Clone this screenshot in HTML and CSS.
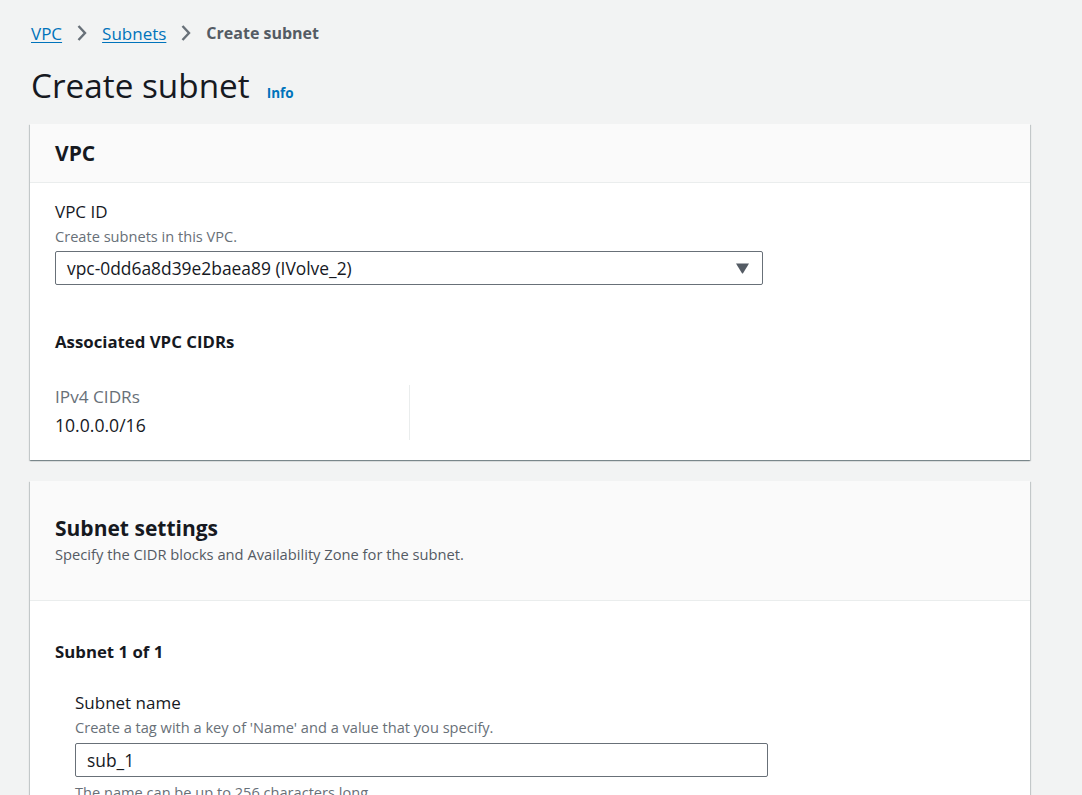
FILE: index.html
```html
<!DOCTYPE html>
<html lang="en">
<head>
<meta charset="utf-8">
<title>Create subnet</title>
<link rel="stylesheet" href="styles.css">
</head>
<body>
<div class="page">
  <nav class="crumbs">
    <a class="crumb-link" href="#">VPC</a>
    <svg class="chev" width="16" height="18" viewBox="0 0 16 18"><path d="M4.5 2 L11 9 L4.5 16" fill="none" stroke="#687078" stroke-width="2.4"/></svg>
    <a class="crumb-link" href="#">Subnets</a>
    <svg class="chev" width="16" height="18" viewBox="0 0 16 18"><path d="M4.5 2 L11 9 L4.5 16" fill="none" stroke="#687078" stroke-width="2.4"/></svg>
    <span class="crumb-current">Create subnet</span>
  </nav>
  <div class="title-row">
    <h1 class="title">Create subnet</h1>
    <a class="info" href="#">Info</a>
  </div>

  <section class="card">
    <div class="card-head small">
      <h2 class="card-title">VPC</h2>
    </div>
    <div class="card-body">
      <div class="field">
        <div class="label">VPC ID</div>
        <div class="desc">Create subnets in this VPC.</div>
        <div class="select">
          <span>vpc-0dd6a8d39e2baea89 (IVolve_2)</span>
          <svg class="caret" width="13" height="11" viewBox="0 0 13 11"><path d="M0 0.5 L13 0.5 L7.2 10 Q6.5 11 5.8 10 Z" fill="#545b64"/></svg>
        </div>
      </div>
      <h3 class="sub-title">Associated VPC CIDRs</h3>
      <div class="kv-row">
        <div class="kv">
          <div class="kv-key">IPv4 CIDRs</div>
          <div class="kv-val">10.0.0.0/16</div>
        </div>
        <div class="kv divided"></div>
      </div>
    </div>
  </section>

  <section class="card">
    <div class="card-head big">
      <h2 class="card-title">Subnet settings</h2>
      <div class="card-desc">Specify the CIDR blocks and Availability Zone for the subnet.</div>
    </div>
    <div class="card-body second">
      <h3 class="sub-title">Subnet 1 of 1</h3>
      <div class="field indent">
        <div class="label">Subnet name</div>
        <div class="desc">Create a tag with a key of 'Name' and a value that you specify.</div>
        <div class="input">sub_1</div>
        <div class="hint">The name can be up to 256 characters long.</div>
      </div>
    </div>
  </section>
</div>
</body>
</html>
```
FILE: styles.css
```css
html, body {
  margin: 0;
  padding: 0;
  background: #f2f3f3;
  font-family: "Open Sans", "Noto Sans", sans-serif;
  color: #16191f;
  overflow: hidden;
}
.page {
  padding: 18px 52px 0 30px;
  width: 1000px;
}
.crumbs {
  display: flex;
  align-items: center;
  gap: 12px;
  height: 30px;
  padding-left: 1px;
}
.crumb-link {
  color: #0073bb;
  font-size: 17px;
  text-decoration: underline;
  text-underline-offset: 2px;
}
.chev { display: block; }
.crumb-current {
  color: #545b64;
  font-size: 16px;
  font-weight: 700;
}
.title-row {
  display: flex;
  align-items: baseline;
  gap: 17px;
  margin-top: 17px;
  padding-left: 1px;
}
.title {
  margin: 0;
  font-size: 33.3px;
  font-weight: 400;
  line-height: 40px;
}
.info {
  color: #0073bb;
  font-size: 13.5px;
  font-weight: 700;
  text-decoration: none;
}
.card {
  background: #fff;
  box-shadow: 0 1px 1px 0 rgba(0,28,36,0.3), 1px 1px 1px 0 rgba(0,28,36,0.15), -1px 1px 1px 0 rgba(0,28,36,0.15);
  margin-bottom: 21px;
}
.title-row + .card { margin-top: 19px; }
.card-head {
  background: #fafafa;
  border-bottom: 1px solid #eaeded;
  padding: 0 25px;
}
.card-head.small {
  box-sizing: border-box;
  height: 59px;
  display: flex;
  align-items: center;
}
.card-head.big {
  padding-top: 32px;
  padding-bottom: 35px;
}
.card-title {
  margin: 0;
  font-size: 21px;
  font-weight: 700;
  line-height: 30px;
}
.card-desc {
  font-size: 14.7px;
  color: #545b64;
  line-height: 22px;
}
.card-body {
  padding: 17px 25px 20px;
}
.card-body.second { padding-top: 39px; }
.field .label {
  font-size: 17px;
  line-height: 24px;
}
.field .desc {
  font-size: 14.6px;
  color: #687078;
  line-height: 24px;
  margin-bottom: 3px;
}
.indent .desc { margin-bottom: 4px; }
.select, .input {
  box-sizing: border-box;
  height: 34px;
  border: 1px solid #687078;
  border-radius: 2px;
  display: flex;
  align-items: center;
  padding: 0 13px 0 11px;
  font-size: 17.4px;
}
.select {
  width: 708px;
  justify-content: space-between;
}
.caret { display: block; }
.sub-title {
  margin: 45px 0 0;
  font-size: 16.8px;
  font-weight: 700;
  line-height: 24px;
}
.card-body.second .sub-title { margin-top: 0; }
.kv-row {
  display: flex;
  margin-top: 31px;
}
.kv {
  width: 354px;
  height: 55px;
}
.kv.divided {
  border-left: 1px solid #eaeded;
}
.kv-key {
  font-size: 17.2px;
  color: #687078;
  line-height: 24px;
}
.kv-val {
  font-size: 17.6px;
  line-height: 32px;
}
.indent {
  padding-left: 20px;
  margin-top: 27px;
}
.input { width: 693px; }
.hint {
  font-size: 14.6px;
  color: #687078;
  line-height: 22px;
  margin-top: 4px;
}
```
